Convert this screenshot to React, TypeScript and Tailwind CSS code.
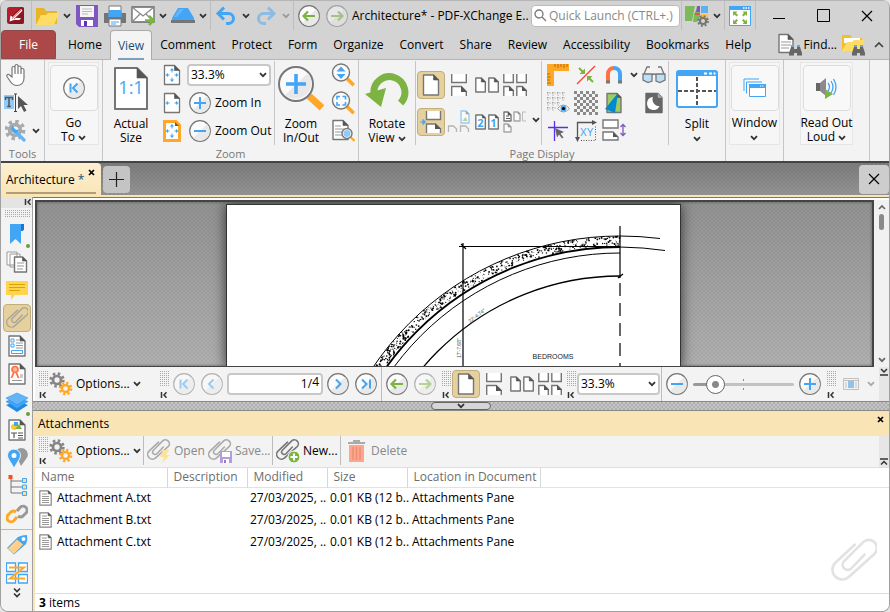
import type { ReactNode } from "react";

const BLUE = "#42a5f5";
const GREEN = "#7cb342";
const ORANGE = "#ffa726";
const GREY = "#757575";

/* ---------- small drawing helpers ---------- */

function Svg({ w, h = w, box, className = "", children }: { w: number; h?: number; box?: string; className?: string; children: ReactNode }) {
  return (
    <svg width={w} height={h} viewBox={box || `0 0 ${w} ${h}`} fill="none" className={`block shrink-0 ${className}`} aria-hidden="true">
      {children}
    </svg>
  );
}

function Sheet({ x, y, w, h, f = 5, fill = "#fff", stroke = GREY, s = 1.4, fold = "#555" }: any) {
  return (
    <>
      <path d={`M${x} ${y}h${w - f}l${f} ${f}v${h - f}h${-w}z`} fill={fill} stroke={stroke} strokeWidth={s} strokeLinejoin="round" />
      <path d={`M${x + w - f} ${y}v${f}h${f}z`} fill={fold} stroke={fold} strokeWidth=".6" />
    </>
  );
}

function Chevron({ color = "#333" }: { color?: string }) {
  return (
    <Svg w={8} h={6}>
      <path d="M1 1.2l3 3 3-3" stroke={color} strokeWidth="1.8" />
    </Svg>
  );
}

function Round({ children, faded }: { children: ReactNode; faded?: boolean }) {
  return (
    <Svg w={22}>
      <g opacity={faded ? 0.5 : 1}>
        <circle cx="11" cy="11" r="10.3" fill="#fbfbfb" stroke="#777" strokeWidth="1.2" />
        <path d="M18 4A9.7 9.7 0 0 1 4 18z" fill="#e9e9e9" />
        {children}
      </g>
    </Svg>
  );
}

function Gear({ cx, cy, r, color, hole = "#f3f3f3" }: { cx: number; cy: number; r: number; color: string; hole?: string }) {
  const step = (2 * Math.PI * r) / 16;
  return (
    <>
      <circle cx={cx} cy={cy} r={r} stroke={color} strokeWidth={r * 0.45} strokeDasharray={`${step} ${step}`} />
      <circle cx={cx} cy={cy} r={r * 0.85} fill={color} />
      <circle cx={cx} cy={cy} r={r * 0.42} fill={hole} />
    </>
  );
}

const CLIP = "M72 20L14 74A28 28 0 0 0 54 118L132 48A24 24 0 0 0 98 12L40 70A15 15 0 0 0 62 92L102 50";

function Clip({ color = "#aaa", width = 10 }: { color?: string; width?: number }) {
  return <path d={CLIP} transform="scale(.16)" stroke={color} strokeWidth={width} strokeLinecap="round" strokeLinejoin="round" />;
}

function Lens({ x, y, r, children }: { x: number; y: number; r: number; children?: ReactNode }) {
  return (
    <>
      <path d={`M${x + r * 0.75} ${y + r * 0.75}l${r * 0.75} ${r * 0.75}`} stroke={ORANGE} strokeWidth={r * 0.42} />
      <circle cx={x} cy={y} r={r} fill="#fafafa" stroke="#777" strokeWidth="1.4" />
      {children}
    </>
  );
}

/* ---------- toolbar parts ---------- */

function Tool({ label, on, children, className = "h-7 w-7" }: { label: string; on?: boolean; children: ReactNode; className?: string }) {
  return (
    <button
      aria-label={label}
      className={`flex shrink-0 items-center justify-center ${className} ${on ? "rounded-sm border border-[#c0ae80] bg-[#e5d09e]" : ""}`}
    >
      {children}
    </button>
  );
}

function Drop({ label = "More", color }: { label?: string; color?: string }) {
  return (
    <Tool label={label} className="h-7 w-3">
      <Chevron color={color} />
    </Tool>
  );
}

function Sep() {
  return <div className="mx-px w-px shrink-0 self-stretch bg-[#bdbdbd]" />;
}

function Grip() {
  return (
    <div className="flex w-[13px] shrink-0 flex-col items-center gap-1 pt-px">
      <div className="h-4 w-[10px] bg-[conic-gradient(#a8a8a8_25%,transparent_0)] bg-[length:2px_2px]" />
      <Svg w={8} h={8}>
        <path d="M1.5 1v6M6.5 1.2L4 4l2.5 2.8" stroke="#333" strokeWidth="1.5" />
      </Svg>
    </div>
  );
}

function ZoomSelect({ id, className }: { id: string; className: string }) {
  return (
    <div className={`grid shrink-0 items-center ${className}`}>
      <select
        id={id}
        aria-label="Zoom level"
        defaultValue="33.3%"
        className="col-start-1 row-start-1 h-[22px] w-full appearance-none rounded-sm border-2 border-[#c8c8c8] bg-white pl-[2px] text-xs leading-4"
      >
        <option>33.3%</option>
        <option>100%</option>
      </select>
      <div className="pointer-events-none col-start-1 row-start-1 mr-1 justify-self-end">
        <Chevron />
      </div>
    </div>
  );
}

/* ---------- page layout icons, shared by ribbon and navigation bar ---------- */

function SinglePage() {
  return (
    <Svg w={22}>
      <Sheet x={3.5} y={1} w={15} h={20} f={5} />
    </Svg>
  );
}

function Continuous() {
  return (
    <Svg w={18} h={22}>
      <path d="M1.7 0v8.5h14.6V0" fill="#fff" stroke={GREY} strokeWidth="1.4" />
      <path d="M1.7 22V12.5h9.6l5 5V22" fill="#fff" stroke={GREY} strokeWidth="1.4" />
      <path d="M11 12v6h6z" fill="#555" />
    </Svg>
  );
}

function TwoPages() {
  return (
    <Svg w={24} h={16}>
      <Sheet x={0.8} y={1} w={9.5} h={14} f={4} />
      <Sheet x={13.8} y={1} w={9.5} h={14} f={4} />
    </Svg>
  );
}

function TwoContinuous() {
  return (
    <Svg w={24} h={22}>
      {[0, 13].map((x) => (
        <g key={x} transform={`translate(${x})`}>
          <path d="M.8 0v8.5h9.5V0" fill="#fff" stroke={GREY} strokeWidth="1.4" />
          <path d="M.8 22V12.5h5.5l4 4V22" fill="#fff" stroke={GREY} strokeWidth="1.4" />
          <path d="M6 12v5h5z" fill="#555" />
        </g>
      ))}
    </Svg>
  );
}

function Arrow({ back, faded }: { back?: boolean; faded?: boolean }) {
  return (
    <Round faded={faded}>
      <path d={back ? "M17 11H6M10 6.5L5.5 11l4.5 4.5" : "M5 11h11M12 6.5l4.5 4.5-4.5 4.5"} stroke={GREEN} strokeWidth="2.2" />
    </Round>
  );
}

const Plus = () => (
  <Round>
    <path d="M11 5v12M5 11h12" stroke={BLUE} strokeWidth="2" />
  </Round>
);

const Minus = () => (
  <Round>
    <path d="M5 11h12" stroke={BLUE} strokeWidth="2" />
  </Round>
);

function Gears() {
  return (
    <Svg w={24}>
      <Gear cx={8} cy={8} r={6.3} color="#858585" />
      <Gear cx={16.5} cy={16.5} r={5.6} color={ORANGE} />
    </Svg>
  );
}

function Undo({ redo }: { redo?: boolean }) {
  return (
    <Svg w={22} h={20}>
      <g transform={redo ? "matrix(-1 0 0 1 22 0)" : undefined} stroke={redo ? "#8dbbe2" : BLUE} strokeWidth="3">
        <path d="M9 1.5L3 7.5l6 6" />
        <path d="M3 7.5h10.500a5 5 0 0 1 0 10H11" />
      </g>
    </Svg>
  );
}

function Binoculars({ x, y }: { x: number; y: number }) {
  return (
    <g transform={`translate(${x} ${y})`}>
      <path d="M2 2h3v9H0V8zM8 2h3l2 6v3H8zM5 4h3v4H5z" fill="#666" />
      <path d="M2 0h3v2H2zM8 0h3v2H8zM0 10h5v1H0zM8 10h5v1H8z" fill="#7d9fbb" />
    </g>
  );
}

/* ---------- title bar ---------- */

function TitleBar() {
  return (
    <header className="flex h-[30px] shrink-0 items-center border-t border-[#b5b5b5] bg-[#d3d3d3]">
      <div className="flex w-[29px] shrink-0 justify-center">
        <Svg w={17}>
          <rect width="17" height="17" rx="2.5" fill="#b21f2a" />
          <path d="M0 14L14 0h1a2 2 0 0 1 2 2v13a2 2 0 0 1-2 2H3z" fill="#8d1720" />
          <path d="M2.500 14.500l1-6 2 1.500L14 2l1.500 1.500L8.500 11H14l-1.500 2H7z" fill="#fff" />
          <path d="M5 11.500l9-8.500M7 12l8-7" stroke="#a01c26" strokeWidth=".7" />
        </Svg>
      </div>
      <Sep />
      <Tool label="Open">
        <Svg w={24} h={20}>
          <path d="M1 18V2h8l2 3h11v13z" fill="#e9b526" />
          <path d="M1 19L6 9h5l2-2h11l-5 12z" fill="#ffdc63" />
        </Svg>
      </Tool>
      <Drop />
      <Tool label="Save">
        <Svg w={22}>
          <path d="M0 0h22v22H3l-3-3z" fill="#7e57c2" />
          <path d="M4 1h14v11H4z" fill="#f5f5f5" />
          <path d="M6 4h10M6 6.500h10M6 9h6" stroke="#bbb" />
          <path d="M5 15h12v6H5z" fill="#fff" />
          <path d="M8 16h3v5H8z" fill="#5e35b1" />
        </Svg>
      </Tool>
      <Tool label="Print">
        <Svg w={22}>
          <path d="M5 1h12v8H5z" fill="#fff" stroke="#777" />
          <path d="M0 8h22v10H0z" fill="#757575" />
          <path d="M5 5h12l1 7H4z" fill={BLUE} />
          <path d="M5 14h12v7H5z" fill="#fff" stroke="#777" />
          <path d="M7 17h8M7 19h5" stroke={BLUE} />
        </Svg>
      </Tool>
      <Tool label="Email">
        <Svg w={24} h={20}>
          <path d="M1 1h22v15H1z" fill="#fff" stroke="#666" strokeWidth="1.300" />
          <path d="M1 1l11 9L23 1M1 16l8-8M23 16l-8-8" stroke="#888" strokeWidth="1.200" />
          <path d="M14 14.500h7M18 10l4.500 4.500L18 19" stroke={GREEN} strokeWidth="2.600" />
        </Svg>
      </Tool>
      <Drop />
      <Tool label="Scan">
        <Svg w={24} h={16}>
          <path d="M7 0h10l6 10v2H1v-2z" fill={BLUE} />
          <path d="M8 1h5L6 9H3z" fill="#64b5f6" />
          <path d="M0 12h24v3H0z" fill="#757575" />
        </Svg>
      </Tool>
      <Drop />
      <Sep />
      <Tool label="Undo"><Undo /></Tool>
      <Drop />
      <Tool label="Redo"><Undo redo /></Tool>
      <Drop color="#999" />
      <Sep />
      <Tool label="Back"><Arrow back /></Tool>
      <Tool label="Forward"><Arrow faded /></Tool>
      <h1 className="min-w-0 flex-1 pl-px text-xs leading-4 whitespace-nowrap">Architecture* - PDF-XChange E..</h1>
      <label className="flex h-[22px] w-[149px] shrink-0 items-center gap-[2px] rounded-sm border border-[#bbb] bg-white pl-[2px]">
        <Svg w={13}>
          <circle cx="5" cy="5" r="4" stroke="#777" strokeWidth="1.300" />
          <path d="M8 8l4 4" stroke="#777" strokeWidth="1.300" />
        </Svg>
        <input aria-label="Quick Launch" placeholder="Quick Launch (CTRL+.)" className="w-full min-w-0 text-xs leading-4 outline-none placeholder:text-[#888]" />
      </label>
      <div className="flex h-full shrink-0 items-center">
        <Sep />
        <Tool label="UI options">
          <Svg w={24} h={22}>
            <path d="M0 1h10l-3 15H0z" fill="#7cb95b" />
            <path d="M9 9l2-4h4v7l-3 5H8z" fill="#7cb95b" />
            <path d="M12 1h3v6h-4z" fill="#7e57c2" />
            <path d="M16 1h7v7h-7z" fill="#5fb0f0" />
            <path d="M10 8h5v2h-5z" fill="#ef5350" />
            <path d="M16 9h7v7h-7z" fill="#ffc14d" />
            <Gear cx={18} cy={16} r={4.800} color="#757575" hole="#d3d3d3" />
          </Svg>
        </Tool>
        <Drop />
        <Sep />
        <Tool label="Full screen">
          <Svg w={22} h={20}>
            <path d="M.5 .5h21v19H.5z" fill="#fff" stroke={BLUE} />
            <path d="M0 0h22v4H0z" fill={BLUE} />
            <path d="M14 2h1.500M16.500 2H18M19 2h1.500" stroke="#fff" strokeWidth="1.500" />
            <path d="M4 10V5.500h4.500L7 7l2 2-1.500 1.500-2-2zM18 10V5.500h-4.500L15 7l-2 2 1.500 1.500 2-2zM4 13.500V18h4.500L7 16.500l2-2L7.500 13l-2 2zM18 13.500V18h-4.500l1.500-1.500-2-2 1.500-1.500 2 2z" fill={GREEN} />
          </Svg>
        </Tool>
        <Sep />
        <Tool label="Minimize" className="h-7 w-11">
          <Svg w={12}><path d="M0 8.500h12" stroke="#000" /></Svg>
        </Tool>
        <Tool label="Maximize" className="h-7 w-11">
          <Svg w={13}><path d="M.5.5h12v12H.5z" stroke="#000" /></Svg>
        </Tool>
        <Tool label="Close" className="h-7 w-11">
          <Svg w={12}><path d="M1 1l10 10M11 1L1 11" stroke="#000" strokeWidth="1.200" /></Svg>
        </Tool>
      </div>
    </header>
  );
}

const tabs = ["Home", "View", "Comment", "Protect", "Form", "Organize", "Convert", "Share", "Review", "Accessibility", "Bookmarks", "Help"];

function MenuBar() {
  return (
    <nav className="flex h-[30px] shrink-0 items-stretch border-b border-[#b5b5b5] bg-[#d3d3d3]">
      <button className="mr-1 w-[55px] shrink-0 rounded-t-sm border border-[#8d4a4a] bg-[#ac4848] text-xs leading-4 text-white">File</button>
      {tabs.map((tab) =>
        tab === "View" ? (
          <button key={tab} className="-mb-px flex flex-col items-center justify-end rounded-t border border-b-0 border-[#aaa] bg-[#f4f4f4] px-[7px] text-xs leading-4 text-[#1f4e79]">
            {tab}
            <span className="mt-1 h-[2px] w-full bg-[#7da0bd]" />
          </button>
        ) : (
          <button key={tab} className="px-2 text-xs leading-4">{tab}</button>
        )
      )}
      <div className="ml-auto flex items-center">
        <button className="flex items-center gap-[2px] text-xs leading-4">
          <Svg w={24}>
            <Sheet x={1} y={1.500} w={14} h={18} f={5} />
            <path d="M3 9h10M3 12h10M3 15h8" stroke="#999" />
            <Binoculars x={11} y={12} />
          </Svg>
          Find...
        </button>
        <Tool label="Search folder" className="h-7 w-8">
          <Svg w={24}>
            <path d="M1 17V2h8l2 3h10v12z" fill="#f4bd2c" />
            <path d="M3 5h16v5H3z" fill="#fff" />
            <path d="M1 18L6 9h5l2-2h11l-5 11z" fill="#ffdc63" />
            <Binoculars x={11} y={12} />
          </Svg>
        </Tool>
        <Tool label="Collapse ribbon" className="h-7 w-5">
          <Svg w={10} h={7}><path d="M1 6l4-4 4 4" stroke="#444" strokeWidth="1.700" /></Svg>
        </Tool>
      </div>
    </nav>
  );
}

/* ---------- ribbon ---------- */

function Group({ label, className, children }: { label?: string; className: string; children: ReactNode }) {
  return (
    <section className={`flex shrink-0 flex-col border-r border-[#c6c6c6] pt-px ${className}`}>
      <div className="flex h-[84px]">{children}</div>
      {label && <h2 className="mt-px text-center text-[11px] leading-4 text-[#777]">{label}</h2>}
    </section>
  );
}

function Big({ icon, lines, framed, className }: { icon: ReactNode; lines: ReactNode; framed?: boolean; className: string }) {
  return (
    <button className={`flex shrink-0 flex-col items-center text-xs leading-[14px] ${framed ? "mt-px border border-[#e6e6e6] bg-[#f6f6f6] pt-[2px]" : "pt-1"} ${className}`}>
      <span className={`mb-[5px] flex h-12 items-center justify-center ${framed ? "w-12 rounded-sm border border-[#dcdcdc] bg-[#f8f8f8]" : ""}`}>{icon}</span>
      <span className="text-center [&_svg]:inline-block">{lines}</span>
    </button>
  );
}

function FitIcon({ kind }: { kind: "page" | "width" | "visible" }) {
  return (
    <Svg w={18} h={22}>
      {kind === "visible" && <path d="M1 1h12l4 4v16H1z" fill={ORANGE} stroke={ORANGE} strokeWidth="2" />}
      {kind === "visible" ? (
        <>
          <path d="M3 3h9v3h3v13H3z" fill="#fff" />
          <path d="M12 2v4h4z" fill="#8a5a10" />
        </>
      ) : (
        <Sheet x={1.500} y={1.500} w={15} h={19} f={5} s={1.300} />
      )}
      <g fill={BLUE} stroke={BLUE}>
        <path d="M6.500 11H4M11.500 11H14" />
        <path d="M5 9l-2.500 2L5 13zM13 9l2.500 2-2.500 2z" strokeWidth=".1" />
        {kind !== "width" && (
          <>
            <path d="M9 8.500V6M9 13.500V16" />
            <path d="M7 6.500L9 4l2 2.500zM7 15.500L9 18l2-2.500z" strokeWidth=".1" />
          </>
        )}
      </g>
    </Svg>
  );
}

function DisplayTools() {
  return (
    <div className="grid grid-cols-[28px_28px_28px_12px_28px] grid-rows-3">
      <Tool label="Rulers">
        <Svg w={22}>
          <path d="M0 0h22v7H7v15H0z" fill={ORANGE} />
          <path d="M8 0v3M11 0v4M14 0v3M17 0v4M20 0v3M0 10h3M0 13h4M0 16h3M0 19h4" stroke="#b86e00" />
        </Svg>
      </Tool>
      <Tool label="Thin lines">
        <Svg w={20}>
          <path d="M1 19L19 1" stroke="#f44336" strokeWidth="1.300" />
          <path d="M3 3l5 5M17 17l-5-5" stroke={GREEN} strokeWidth="2" />
          <path d="M9 3.500V9H3.500zM11 16.500V11h5.500z" fill={GREEN} />
        </Svg>
      </Tool>
      <Tool label="Snap">
        <Svg w={18} h={20}>
          <path d="M3 16V9a6 6 0 0 1 6-6" stroke="#ff7043" strokeWidth="4" />
          <path d="M15 16V9a6 6 0 0 0-6-6" stroke={BLUE} strokeWidth="4" />
          <path d="M1 17h4M13 17h4" stroke="#777" strokeWidth="3" />
        </Svg>
      </Tool>
      <Drop />
      <Tool label="Proof view">
        <Svg w={24} h={18}>
          <path d="M2 8L5 1h3M22 8l-3-7h-3" stroke="#777" strokeWidth="1.300" />
          <path d="M1 8h9v7l-4 1.500L1 14zM14 8h9v6l-5 2.500-4-1.500z" fill="#bcdff8" stroke="#777" strokeWidth="1.300" />
          <path d="M10 9q2-2 4 0" stroke="#777" strokeWidth="1.300" />
        </Svg>
      </Tool>
      <Tool label="Grid">
        <Svg w={24}>
          <path d="M1 2h18M1 7h18M1 12h13M1 17h10M2 1v20M7 1v20M12 1v14M17 1v10" stroke="#888" strokeDasharray="1 1.500" />
          <path d="M11.500 17.500q6-7 12 0-6 7-12 0z" fill="#fff" stroke="#999" />
          <circle cx="17.500" cy="17.500" r="3" fill={BLUE} />
          <circle cx="17.500" cy="17.500" r="1.600" fill="#000" />
        </Svg>
      </Tool>
      <Tool label="Transparency grid">
        <Svg w={24}>
          {Array.from({ length: 32 }, (_, i) => {
            const row = Math.floor(i / 4);
            return <rect key={i} x={(i % 4) * 6 + (row % 2 ? 3 : 0)} y={row * 3} width="3" height="3" fill="#8a8a8a" />;
          })}
        </Svg>
      </Tool>
      <Tool label="Colour view">
        <Svg w={18} h={22}>
          <Sheet x={2} y={1.500} w={14} h={19} f={4} fill="#9ccc65" />
          <path d="M13 1L0 17l10 4z" fill="#0288d1" />
        </Svg>
      </Tool>
      <span />
      <Tool label="Dark view">
        <Svg w={18} h={22}>
          <Sheet x={1} y={1.500} w={16} h={19} f={4} fill="#666" stroke="#666" fold="#aaa" />
          <path d="M8 5a6.500 6.500 0 1 0 6.500 9A6.500 6.500 0 0 1 8 5z" fill="#fff" />
        </Svg>
      </Tool>
      <Tool label="Guides">
        <Svg w={22}>
          <path d="M7.500 1v20M1 7.500h20" stroke="#5b2df0" strokeWidth="1.300" />
          <path d="M8 8l9 4-3.500 1.500 3 4-1.500 1-3-4-2 3z" fill="#666" />
        </Svg>
      </Tool>
      <Tool label="Coordinates">
        <Svg w={22}>
          <path d="M2 2.500h17M2.500 2v17" stroke="#555" strokeWidth="1.300" />
          <path d="M17 0l5 2.500L17 5zM0 17h5l-2.500 5z" fill="#555" />
          <path d="M6 20.500h14.500V6" stroke="#555" strokeDasharray="1 1.500" />
          <text x="5" y="16" fontSize="10" fill={BLUE} fontFamily="Liberation Sans, sans-serif">XY</text>
        </Svg>
      </Tool>
      <Tool label="Page gaps">
        <Svg w={24}>
          <path d="M1 1h15v8H1z" fill="#fff" stroke="#777" strokeWidth="1.400" />
          <path d="M1 21v-8h10l5 5v3z" fill="#fff" stroke="#777" strokeWidth="1.400" />
          <path d="M11 13v5h5z" fill="#555" />
          <path d="M21 6v10M18.500 8L21 5.500 23.500 8M18.500 14l2.500 2.500 2.500-2.500" stroke="#7e57c2" strokeWidth="1.300" />
        </Svg>
      </Tool>
    </div>
  );
}

function Ribbon() {
  return (
    <div className="flex h-[101px] shrink-0 overflow-hidden bg-[#f3f3f3]">
      <Group label="Tools" className="w-11">
        <div className="flex flex-col pl-px">
          <Tool label="Hand">
            <Svg w={20} h={24}>
              <path d="M6 14V5a1.500 1.500 0 0 1 3 0V3a1.500 1.500 0 0 1 3 0v1.500a1.500 1.500 0 0 1 3 0V7a1.500 1.500 0 0 1 3 0v8c0 5-3 7.500-7 7.500-3 0-5-1-7-4.500l-3-4.500c-.8-2 1.500-2.800 2.500-1.500zM9 4.500V11M12 4v7M15 6v5" fill="#fff" stroke="#777" strokeWidth="1.200" />
            </Svg>
          </Tool>
          <Tool label="Select text">
            <Svg w={24} h={20}>
              <path d="M0 2h10v14H0z" fill="#90caf9" />
              <path d="M1.500 7V4.500h7V7M5 4.500v9M3.200 13.500h3.600" stroke="#555" strokeWidth="1.500" />
              <path d="M11.500 1v17M10 1h3M10 18.500h3" stroke="#444" />
              <path d="M14 3v13l3-3 3 6 2.500-1.500-3-5.500H24z" fill="#555" />
            </Svg>
          </Tool>
          <div className="flex">
            <Tool label="Other tools">
              <Svg w={22}>
                <Gear cx={10} cy={10} r={8.500} color="#aaa" />
                <path d="M10 11l9 9" stroke="#64b5f6" strokeWidth="3.200" strokeLinecap="round" />
                <path d="M8 5.500a4 4 0 1 0 6 4l-3 .5-2-2z" fill={BLUE} />
              </Svg>
            </Tool>
            <Tool label="More tools" className="h-7 w-3"><Chevron /></Tool>
          </div>
        </div>
      </Group>

      <Group className="w-[58px] items-center">
        <Big
          framed
          className="w-[51px]"
          lines={<>Go<br />To <Chevron /></>}
          icon={<Round><path d="M7.500 6.500v9M14.500 6.500L10 11l4.500 4.500" stroke={BLUE} strokeWidth="2" /></Round>}
        />
      </Group>

      <Group label="Zoom" className="w-64">
        <Big
          className="w-14"
          lines={<>Actual<br />Size</>}
          icon={
            <Svg w={34} h={43}>
              <Sheet x={1} y={1} w={32} h={41} f={10} s={2} />
              <text x="17" y="27" textAnchor="middle" fontSize="18" fill={BLUE} fontFamily="Open Sans, sans-serif">1:1</text>
            </Svg>
          }
        />
        <div className="flex w-[25px] flex-col pl-px">
          <Tool label="Fit page" className="h-7 w-6"><FitIcon kind="page" /></Tool>
          <Tool label="Fit width" className="h-7 w-6"><FitIcon kind="width" /></Tool>
          <Tool label="Fit visible" className="h-7 w-6"><FitIcon kind="visible" /></Tool>
        </div>
        <div className="ml-[3px] flex w-[84px] flex-col">
          <div className="flex h-7 items-center"><ZoomSelect id="ribbon-zoom" className="w-[84px]" /></div>
          <button className="flex h-7 items-center gap-1 whitespace-nowrap pl-[2px] text-xs leading-4"><Plus />Zoom In</button>
          <button className="flex h-7 items-center gap-1 whitespace-nowrap pl-[2px] text-xs leading-4"><Minus />Zoom Out</button>
        </div>
        <div className="ml-[3px]"><div className="h-full w-px bg-[#c6c6c6]" /></div>
        <Big
          className="w-13"
          lines={<>Zoom<br />In/Out</>}
          icon={
            <Svg w={46} h={47}>
              <path d="M31 31l13 12" stroke={ORANGE} strokeWidth="7" />
              <circle cx="18" cy="19" r="17" fill="#fafafa" stroke="#777" strokeWidth="2" />
              <path d="M30 8A16 16 0 0 1 7 30z" fill="#e8e8e8" />
              <path d="M18 9v20M8 19h20" stroke={BLUE} strokeWidth="3.600" />
            </Svg>
          }
        />
        <div className="flex flex-col pl-[2px]">
          <Tool label="Dynamic zoom">
            <Svg w={24}>
              <Lens x={10} y={9.500} r={8.500}><path d="M5.500 8.500L10 3.500l4.500 5zM5.500 11L10 16l4.500-5z" fill={BLUE} /></Lens>
            </Svg>
          </Tool>
          <Tool label="Marquee zoom">
            <Svg w={24}>
              <Lens x={10} y={9.500} r={8.500}><path d="M6 8.500v-3h3M11.500 5.500h3v3M14.500 11v3h-3M9 14H6v-3" stroke={BLUE} strokeWidth="1.600" /></Lens>
            </Svg>
          </Tool>
          <Tool label="Loupe">
            <Svg w={24}>
              <Sheet x={2} y={1.500} w={15} h={19} f={5} />
              <path d="M4 7h6M4 10h9M4 13h8M4 16h7" stroke="#999" />
              <Lens x={16} y={14.500} r={5}><circle cx="16" cy="14.500" r="3.500" fill="#90caf9" /></Lens>
            </Svg>
          </Tool>
        </div>
      </Group>

      <Group label="Page Display" className="w-[367px]">
        <Big
          className="w-14"
          lines={<>Rotate<br />View <Chevron /></>}
          icon={
            <Svg w={44} h={40}>
              <path d="M35.500 34A15.500 15.500 0 1 0 9 25" stroke={GREEN} strokeWidth="7" />
              <path d="M0 25l21-6-5 19z" fill={GREEN} />
            </Svg>
          }
        />
        <div className="w-px bg-[#c6c6c6]" />
        <div className="grid h-full w-[113px] grid-cols-4 content-start gap-y-[9px] pt-[10px] pl-px">
          <Tool label="Single page" on><SinglePage /></Tool>
          <Tool label="Continuous"><Continuous /></Tool>
          <Tool label="Two pages"><TwoPages /></Tool>
          <Tool label="Two pages continuous"><TwoContinuous /></Tool>
          <Tool label="Page gap" on>
            <Svg w={22}>
              <path d="M6.500 0v8.500h14V0M6.500 22v-9h9l5 5v4" fill="#fff" stroke="#777" strokeWidth="1.400" />
              <path d="M15 12.500V18h6z" fill="#555" />
              <path d="M0 11h3M3 8.500L5.500 11 3 13.500z" stroke={BLUE} fill={BLUE} />
            </Svg>
          </Tool>
          <Tool label="Cover page">
            <Svg w={24}>
              <g opacity=".5">
                <Sheet x={14} y={1} w={8} h={12} f={3} stroke={BLUE} />
                <path d="M1.500 22v-6h5l3 3v3M13.500 22v-6h5l3 3v3" stroke="#777" strokeWidth="1.300" />
                <path d="M15.500 11l3-4 2 4z" fill={GREEN} />
              </g>
            </Svg>
          </Tool>
          <Tool label="Right to left">
            <Svg w={24} h={16}>
              <Sheet x={0.8} y={1} w={9.500} h={14} f={3} />
              <Sheet x={13.800} y={1} w={9.500} h={14} f={3} />
              <text x="5.500" y="13" textAnchor="middle" fontSize="11" fontWeight="700" fill={BLUE} fontFamily="Open Sans, sans-serif">2</text>
              <text x="18.500" y="13" textAnchor="middle" fontSize="11" fontWeight="700" fill={BLUE} fontFamily="Open Sans, sans-serif">1</text>
            </Svg>
          </Tool>
          <Tool label="Split columns">
            <Svg w={24} h={22}>
              <Sheet x={1} y={1} w={7} h={9} f={3} />
              <path d="M3 5h3M3 7.500h4" stroke="#555" />
              <g opacity=".6"><Sheet x={11} y={1} w={6} h={9} f={2} /><Sheet x={1} y={13} w={7} h={8} f={3} /><path d="M23 1h-3.500v9H23" stroke="#999" /></g>
            </Svg>
          </Tool>
        </div>
        <div className="flex w-3 items-center pt-[34px] pl-[3px]"><Chevron /></div>
        <div className="w-px bg-[#c6c6c6]" />
        <div className="pl-[2px]"><DisplayTools /></div>
        <div className="w-px bg-[#c6c6c6]" />
        <Big
          className="w-14"
          lines={<>Split<br /><Chevron /></>}
          icon={
            <Svg w={42} h={38}>
              <rect x="1" y="1" width="40" height="36" rx="2" fill="#fff" stroke={BLUE} strokeWidth="2" />
              <path d="M1 1h40v5H1z" fill={BLUE} />
              <path d="M28 3.500h3M33 3.500h3M37.500 3.500h2" stroke="#fff" strokeWidth="2" />
              <path d="M2 21h38M21 7v29" stroke="#555" strokeWidth="2" strokeDasharray="4 2" />
            </Svg>
          }
        />
      </Group>

      <Group className="w-[58px] items-center">
        <Big
          framed
          className="w-[51px]"
          lines={<>Window<br /><Chevron /></>}
          icon={
            <Svg w={24} h={20}>
              <path d="M1 13V1h15M3.500 15.500V4H19" stroke={BLUE} />
              <path d="M6.500 6.500h16v12h-16z" fill="#fff" stroke={BLUE} />
              <path d="M6 6h17v4H6z" fill={BLUE} />
              <path d="M17 8h4" stroke="#fff" strokeDasharray="1 .8" />
            </Svg>
          }
        />
      </Group>

      <Group className="w-[86px] items-center">
        <Big
          framed
          className="w-[53px] whitespace-nowrap"
          lines={<>Read Out<br />Loud <Chevron /></>}
          icon={
            <Svg w={24} h={22}>
              <path d="M1 6h4v8H1z" fill="#666" />
              <path d="M5 6l6-5v18l-6-5z" fill="#8a8a8a" />
              <path d="M13 6q3 4 0 8M16 4q4 6 0 12M18.500 2q5 8 0 16" stroke={BLUE} strokeWidth="1.300" />
              <path d="M10 12l8 5-8 5z" fill={GREEN} />
            </Svg>
          }
        />
      </Group>
    </div>
  );
}

/* ---------- left pane strip ---------- */

const panes: { label: string; on?: boolean; dot?: boolean; icon: ReactNode }[] = [
  {
    label: "Bookmarks",
    dot: true,
    icon: <><path d="M4 1h11v20l-5.500-5L4 21z" fill={BLUE} /><path d="M15 1h3v5q0 2-3 2z" fill="#1976d2" /></>,
  },
  {
    label: "Thumbnails",
    icon: <><path d="M1 1h10v13H1zM4 3h10v13H4z" fill="#fff" stroke="#999" /><Sheet x={8.500} y={6} w={12} h={15} f={4} /><path d="M11 12h7M11 15h7M11 18h6" stroke="#999" /></>,
  },
  {
    label: "Comments",
    icon: <><path d="M0 2h22v14H9l-4 5v-5H0z" fill="#ffd54f" /><path d="M3 5.500h16M3 8.500h16M3 11.500h11" stroke="#d9a400" /></>,
  },
  { label: "Attachments", on: true, icon: <Clip width={9} color="#a8a59c" /> },
  {
    label: "Fields",
    icon: <><Sheet x={3} y={1} w={16} h={20} f={5} /><path d="M5 4h3v3H5zM5 9h3v3H5zM5.500 15.500h11v3h-11z" stroke={BLUE} /><path d="M10 5h3M10 8h7M10 10.500h7M10 13h7" stroke="#999" /></>,
  },
  {
    label: "Signatures",
    icon: <><Sheet x={3} y={1} w={16} h={20} f={5} /><circle cx="9" cy="6.500" r="3" fill="#ffb59b" stroke="#ff7043" strokeWidth="1.600" /><path d="M7.500 10l-2 5M10.500 10l2 5" stroke="#ff7043" strokeWidth="1.800" /><path d="M14 12h3M14 14h3M6 17.500h10" stroke="#999" /></>,
  },
  {
    label: "Layers",
    dot: true,
    icon: <><path d="M0 14l11 7 11-7-11-4z" fill="#1e88e5" /><path d="M0 10.500l11 7 11-7-11-4z" fill="#42a5f5" stroke="#1e88e5" strokeWidth=".5" /><path d="M0 7l11 7 11-7-11-5z" fill="#64b5f6" stroke="#1e88e5" strokeWidth=".5" /></>,
  },
  {
    label: "Content",
    icon: <><Sheet x={3} y={1} w={16} h={20} f={5} /><circle cx="8" cy="8" r="3" fill="#ffca28" /><path d="M8 3h4v4H8z" fill={BLUE} /><path d="M9 10l4-5 3 5z" fill={GREEN} /><path d="M5 14h6M8 14v5M12 14h5M12 16.500h5M12 19h5" stroke="#555" strokeWidth="1.200" /></>,
  },
  {
    label: "Destinations",
    icon: <><path d="M9 6a6.500 6.500 0 1 1 11 6l-5 7z" fill="#999" /><path d="M8 21L2.500 12a6.500 6.500 0 1 1 11 0z" fill={BLUE} stroke="#f3f3f3" /><circle cx="8" cy="8.500" r="2.500" fill="#fff" /></>,
  },
  {
    label: "Structure",
    icon: <><path d="M5 4v14h12M5 6h12M5 12h12" stroke="#777" /><path d="M2.500 0h4v4h-4z" fill="#f4511e" /><path d="M16.500 3.500h4v4h-4zM16.500 10h4v4h-4zM16.500 16.500h4v4h-4z" fill="#ffe082" stroke={BLUE} /></>,
  },
  {
    label: "Links",
    icon: <><path d="M11 8l3-3.500a4 4 0 0 1 6 5.500l-3 3a4 4 0 0 1-5 0" stroke="#999" strokeWidth="3" /><path d="M11 14l-3 3.500a4 4 0 0 1-6-5.500l3-3a4 4 0 0 1 5 0" stroke={ORANGE} strokeWidth="3" /></>,
  },
  {
    label: "Tags",
    icon: <><path d="M1 14L12 3q4-2 9-2 1 5-1 9L8 20.500z" fill={BLUE} /><path d="M2 14.500l9-9 6 5-9 9.500z" fill="#ffd08a" /><circle cx="17.500" cy="5" r="2" fill="#fff" /></>,
  },
  {
    label: "Order",
    icon: <><path d="M.5 1h9v8.500h-9zM12.500 1h9v8.500h-9zM.5 12.500h9V21h-9zM12.500 12.500h9V21h-9z" fill="#fff" stroke={BLUE} strokeWidth="1.300" /><path d="M3 5.500h15L4 16.500h15" stroke={ORANGE} strokeWidth="2" /></>,
  },
];

function PaneStrip() {
  return (
    <aside className="flex w-8 shrink-0 flex-col items-center border-r border-[#a0a0a0] bg-[#f3f3f3]">
      <div className="flex h-[11px] w-full shrink-0 justify-end bg-[#e4e4e4] pt-px">
        <Svg w={8} h={8}><path d="M1.500 1v6M6.500 1.200L4 4l2.500 2.800" stroke="#333" strokeWidth="1.500" /></Svg>
      </div>
      <div className="my-[2px] h-2 w-[26px] shrink-0 bg-[conic-gradient(#a8a8a8_25%,transparent_0)] bg-[length:2px_2px]" />
      {panes.map((p) => (
        <div key={p.label} className={`relative flex w-full flex-col items-center ${p.label === "Tags" ? "mt-px border-t border-[#bbb] pt-px" : ""}`}>
          <Tool label={p.label} on={p.on}><Svg w={22}>{p.icon}</Svg></Tool>
          {p.dot && <span className="absolute right-[2px] bottom-0 size-1 rounded-full bg-[#689f38]" />}
        </div>
      ))}
      <Svg w={8} h={12}><path d="M1 1.500l3 3 3-3M1 6.500l3 3 3-3" stroke="#333" strokeWidth="1.600" /></Svg>
    </aside>
  );
}

/* ---------- document ---------- */

// speckle of the concrete wall, spread evenly between the two outer arcs
function wallSpeckle() {
  let seed = 7;
  const rand = () => (seed = (seed * 16807) % 2147483647) / 2147483647;
  const dots: { x: number; y: number; r: number }[] = [];
  for (let i = 0; i < 560; i++) {
    const a = rand() * 1.02;
    const rad = 288.5 + rand() * 9;
    dots.push({ x: 393 - rad * Math.sin(a), y: 329 - rad * Math.cos(a), r: 0.3 + rand() * 0.7 });
  }
  return dots;
}

const dots = wallSpeckle();

function Plan() {
  return (
    <Svg w={453} h={162}>
      <g stroke="#000">
        <path d="M95 329A298 298 0 0 1 393 31q20 0 40 2.500" />
        <path d="M106 329A287 287 0 0 1 393 42" strokeWidth="1.900" />
        <path d="M393 42q24 .4 45 3.500" />
        <path d="M112 329A281 281 0 0 1 393 48" />
        <path d="M135 329A258 258 0 0 1 393 71" strokeWidth="1.300" />
        <path d="M232 41.500h161M236 38v124M393 21v52M234 39l5 5M391 73l5-4" strokeWidth="1.200" />
        <path d="M393 78v84" strokeWidth="1.200" strokeDasharray="13 7" />
      </g>
      {dots.map((d, i) => (
        <circle key={i} cx={d.x} cy={d.y} r={d.r} fill="#000" />
      ))}
      <g fontFamily="Liberation Sans, sans-serif">
        <text x="326" y="154" textAnchor="middle" fontSize="7" fill="#222">BEDROOMS</text>
        <text transform="translate(234 153) rotate(-90)" fontSize="5" fill="#35556f">17'-7.68"</text>
        <text transform="translate(243 118) rotate(-37)" fontSize="5" fill="#444">22'-4.74"</text>
      </g>
    </Svg>
  );
}

const texture = "bg-[repeating-conic-gradient(#0000000d_0_25%,transparent_0_50%),linear-gradient(#939393,#b1b1b1)] bg-[length:4px_4px,100%_100%]";

function DocumentTabs() {
  return (
    <div className="flex h-9 shrink-0 items-stretch border-t-2 border-b-2 border-t-[#444] border-b-[#f9e4b5] bg-[repeating-conic-gradient(#0000000d_0_25%,transparent_0_50%),linear-gradient(#7d7d7d,#959595)] bg-[length:4px_4px,100%_100%]">
      <div className="-mb-[2px] flex w-[100px] shrink-0 flex-col justify-end rounded-tr bg-linear-to-b from-[#fdf0d0] to-[#f9e4b5] px-[5px] pb-[3px]">
        <div className="flex items-start justify-between text-xs leading-4">
          <span>Architecture <span className="text-[#1f4e79]">*</span></span>
          <button aria-label="Close tab" className="-mt-1 p-px">
            <Svg w={7}><path d="M1 1l5 5M6 1L1 6" stroke="#000" strokeWidth="1.700" /></Svg>
          </button>
        </div>
        <div className="mt-1 h-[2px] bg-[#b19f79]" />
      </div>
      <Tool label="New tab" className="mt-[3px] ml-[2px] h-[27px] w-[27px] rounded-sm bg-[#c4c4c4]">
        <Svg w={15}><path d="M7.500 0v15M0 7.500h15" stroke="#222" strokeWidth="1.200" /></Svg>
      </Tool>
      <Tool label="Close document" className="ml-auto h-[29px] w-[30px] self-center rounded-sm bg-[#cdcdcd]">
        <Svg w={12}><path d="M1 1l10 10M11 1L1 11" stroke="#000" strokeWidth="1.200" /></Svg>
      </Tool>
    </div>
  );
}

function DocumentView() {
  return (
    <div className="flex h-[167px] shrink-0">
      <div className={`flex min-w-0 flex-1 justify-center overflow-hidden border-2 border-b border-[#444] pt-[2px] pr-[2px] shadow-[inset_0_0_3px_#555] ${texture}`}>
        <div className="h-[164px] w-[455px] shrink-0 border border-[#333] bg-white shadow-[0_0_12px_#333]">
          <Plan />
        </div>
      </div>
      <div className="flex w-[15px] shrink-0 flex-col items-center bg-[#f1f1f1] py-1">
        <Svg w={8} h={6}><path d="M1 5l3-3 3 3" stroke="#666" strokeWidth="1.600" /></Svg>
        <div className="mt-1 h-4 w-[5px] rounded-full bg-[#8a8a8a]" />
        <div className="mt-auto"><Chevron color="#666" /></div>
      </div>
    </div>
  );
}

function OptionsButton({ className }: { className: string }) {
  return (
    <button className={`flex shrink-0 items-center gap-[3px] text-xs leading-4 ${className}`}>
      <Gears />
      <span className="w-[54px] whitespace-nowrap text-left">Options...</span>
      <Chevron />
    </button>
  );
}

function NavigationBar() {
  return (
    <div className="flex h-[34px] shrink-0 bg-[#f3f3f3]">
      <div className="flex min-w-0 flex-1 items-center overflow-hidden pr-[2px] pl-px">
        <Grip />
        <OptionsButton className="w-[108px]" />
        <Grip />
        <Tool label="First page"><Round faded><path d="M7.500 6.500v9M14.500 6.500L10 11l4.500 4.500" stroke={BLUE} strokeWidth="2" /></Round></Tool>
        <Tool label="Previous page"><Round faded><path d="M12.500 6.500L8 11l4.500 4.500" stroke={BLUE} strokeWidth="2" /></Round></Tool>
        <label className="mx-px flex h-[22px] w-24 shrink-0 items-center rounded-sm border-2 border-[#c8c8c8] bg-white pr-[2px] text-xs leading-4">
          <input aria-label="Page number" defaultValue="1" className="w-full min-w-0 text-right outline-none" />
          <span>/</span>
          <span className="mb-1">4</span>
        </label>
        <Tool label="Next page"><Round><path d="M9 6.500l4.500 4.500L9 15.500" stroke={BLUE} strokeWidth="2" /></Round></Tool>
        <Tool label="Last page"><Round><path d="M7 6.500l4.500 4.500L7 15.500M15 6.500v9" stroke={BLUE} strokeWidth="2" /></Round></Tool>
        <Sep />
        <Tool label="Previous view"><Arrow back /></Tool>
        <Tool label="Next view"><Arrow faded /></Tool>
        <Grip />
        <Tool label="Single page" on><SinglePage /></Tool>
        <Tool label="Continuous"><Continuous /></Tool>
        <Tool label="Two pages"><TwoPages /></Tool>
        <Tool label="Two pages continuous"><TwoContinuous /></Tool>
        <Grip />
        <ZoomSelect id="nav-zoom" className="w-[83px]" />
        <Sep />
        <Tool label="Zoom out"><Minus /></Tool>
        <div className="grid min-w-0 flex-1 items-center px-[2px]">
          <div className="col-start-1 row-start-1 h-[11px] w-px justify-self-center border-y-2 border-[#888]" />
          <input
            type="range"
            aria-label="Zoom"
            min={0}
            max={100}
            defaultValue={16}
            className="col-start-1 row-start-1 h-5 w-full min-w-0 appearance-none bg-transparent [&::-webkit-slider-runnable-track]:h-[3px] [&::-webkit-slider-runnable-track]:rounded-full [&::-webkit-slider-runnable-track]:bg-[linear-gradient(90deg,#999_20%,#c2c2c2_20%)] [&::-webkit-slider-thumb]:-mt-2 [&::-webkit-slider-thumb]:size-[19px] [&::-webkit-slider-thumb]:appearance-none [&::-webkit-slider-thumb]:rounded-full [&::-webkit-slider-thumb]:border [&::-webkit-slider-thumb]:border-[#666] [&::-webkit-slider-thumb]:bg-[radial-gradient(circle,#888_0_3px,#fff_4px)]"
          />
        </div>
        <Tool label="Zoom in"><Plus /></Tool>
        <Grip />
        <Tool label="Layout">
          <Svg w={16} h={12}>
            <path d="M.5.5h15v11H.5zM0 2.500h16M2 5h2M2 7h2M2 9h2M12 5h2M12 7h2M12 9h2" stroke="#c0c0c0" />
            <path d="M5 3h6v7H5z" fill="#90c3ea" />
          </Svg>
        </Tool>
        <Drop color="#aaa" />
      </div>
      <div className="flex w-[10px] shrink-0 justify-center bg-[#e6e6e6] pt-px">
        <Svg w={8} h={8}><path d="M1 1l3 3 3-3M0 7h8" stroke="#333" strokeWidth="1.500" /></Svg>
      </div>
    </div>
  );
}

/* ---------- attachments pane ---------- */

const attachments = [
  { name: "Attachment A.txt", modified: "27/03/2025, ..", size: "0.01 KB (12 b..", location: "Attachments Pane" },
  { name: "Attachment B.txt", modified: "27/03/2025, ..", size: "0.01 KB (12 b..", location: "Attachments Pane" },
  { name: "Attachment C.txt", modified: "27/03/2025, ..", size: "0.01 KB (12 b..", location: "Attachments Pane" },
];

function AttachmentsPane() {
  const command = "flex shrink-0 items-center whitespace-nowrap text-xs leading-4";
  return (
    <section className="flex flex-1 flex-col border-l-2 border-[#f9e4b5] bg-white">
      <div className="flex h-[25px] shrink-0 items-center justify-between bg-[#f9e4b5] pr-[5px] pl-[3px]">
        <h2 className="text-xs leading-4">Attachments</h2>
        <button aria-label="Close pane" className="-mt-2"><Svg w={7}><path d="M1 1l5 5M6 1L1 6" stroke="#000" strokeWidth="1.700" /></Svg></button>
      </div>
      <div className="flex h-8 shrink-0 border-b border-[#dedede] bg-[#f3f3f3]">
        <div className="flex flex-1 items-center pb-[2px] pl-px">
          <Grip />
          <OptionsButton className="w-[93px]" />
          <Sep />
          <button className={`${command} w-[61px] gap-[3px] pl-[2px] text-[#888]`}>
            <Svg w={24}><g opacity=".8"><Clip color="#999" /><path d="M16 11h6l-3 5h4l-8 8 2-6h-4z" fill="#ffe082" /></g></Svg>
            Open
          </button>
          <button className={`${command} w-[65px] gap-[3px] pl-[2px] text-[#888]`}>
            <Svg w={24}><Clip color="#aaa" /><path d="M12 12h12v12H12z" fill="#b39ddb" /><path d="M14 13h8v5h-8zM15 20h6v4h-6z" fill="#fff" /><path d="M16 21h2v3h-2z" fill="#9575cd" /></Svg>
            Save...
          </button>
          <Sep />
          <button className={`${command} w-[65px] gap-[3px] pl-[2px]`}>
            <Svg w={24}><Clip color="#777" /><circle cx="18" cy="18" r="6" fill={GREEN} stroke="#fff" /><path d="M18 14.500v7M14.500 18h7" stroke="#fff" strokeWidth="2" /></Svg>
            New...
          </button>
          <Sep />
          <button className={`${command} gap-[6px] pl-[6px] text-[#888]`}>
            <Svg w={17} h={22}><path d="M0 4V2h5V0h7v2h5v2z" fill="#aaa" /><path d="M1 5h15v17H1z" fill="#ffa58b" /><path d="M5 7v13M8.500 7v13M12 7v13" stroke="#e58d75" strokeWidth="1.300" /></Svg>
            Delete
          </button>
        </div>
        <div className="flex w-[10px] items-end justify-center bg-[#e6e6e6] pb-px">
          <Svg w={8} h={8}><path d="M1 6.500l3-3 3 3M0 1h8" stroke="#333" strokeWidth="1.500" /></Svg>
        </div>
      </div>
      <div className="relative flex-1">
        <table className="w-full table-fixed border-collapse text-left text-xs leading-4">
          <colgroup>
            <col className="w-[132px]" />
            <col className="w-20" />
            <col className="w-20" />
            <col className="w-20" />
            <col className="w-[133px]" />
            <col />
          </colgroup>
          <thead>
            <tr className="h-[19px] border-b border-[#e2e2e2] text-[#6d6d6d]">
              {["Name", "Description", "Modified", "Size", "Location in Document"].map((head) => (
                <th key={head} className="border-r border-[#d8d8d8] p-0 pl-[6px] font-normal whitespace-nowrap">{head}</th>
              ))}
              <th />
            </tr>
          </thead>
          <tbody>
            {attachments.map((file) => (
              <tr key={file.name} className="h-[22px] whitespace-nowrap">
                <td className="p-0">
                  <span className="flex items-center gap-[5px] pl-1">
                    <Svg w={13} h={16}><Sheet x={0.800} y={0.800} w={11.400} h={14.400} f={3} stroke="#888" s={1.200} /><path d="M3 4h5M3 6.500h7M3 8.500h7M3 10.500h7M3 12.500h7" stroke="#999" /></Svg>
                    {file.name}
                  </span>
                </td>
                <td />
                <td className="p-0 pl-[3px]">{file.modified}</td>
                <td className="p-0 pl-[3px]">{file.size}</td>
                <td className="p-0 pl-[5px]">{file.location}</td>
                <td />
              </tr>
            ))}
          </tbody>
        </table>
        <Svg w={46} h={43} box="0 0 140 130" className="absolute right-3 bottom-3">
          <path d={CLIP} stroke="#e2e2e2" strokeWidth="8" strokeLinecap="round" strokeLinejoin="round" />
        </Svg>
      </div>
      <p className="h-[18px] shrink-0 border-t border-[#dedede] pt-px pl-1 text-xs leading-4"><b>3</b> items</p>
    </section>
  );
}

export default function App() {
  return (
    <div className="min-h-screen bg-[#e5e5e5]">
      <div className="flex min-h-screen flex-col overflow-hidden rounded-lg border border-t-0 border-[#a0a0a0] bg-[#d3d3d3] font-['Open_Sans','Noto_Sans',sans-serif] text-black">
        <TitleBar />
        <MenuBar />
        <Ribbon />
        <DocumentTabs />
        <div className="flex flex-1">
          <PaneStrip />
          <main className="flex min-w-0 flex-1 flex-col">
            <div className="border-t border-[#777] bg-white pt-[2px] pl-[2px]">
              <DocumentView />
              <NavigationBar />
            </div>
            <div className="flex h-[10px] shrink-0 justify-center border-y border-[#888] bg-[repeating-conic-gradient(#00000012_0_25%,#b0b0b0_0_50%)] bg-[length:4px_4px]">
              <button aria-label="Collapse pane" className="flex h-2 w-[60px] items-center justify-center rounded-full border border-[#666] bg-[#d6d6d6]">
                <Chevron />
              </button>
            </div>
            <AttachmentsPane />
          </main>
        </div>
      </div>
    </div>
  );
}
